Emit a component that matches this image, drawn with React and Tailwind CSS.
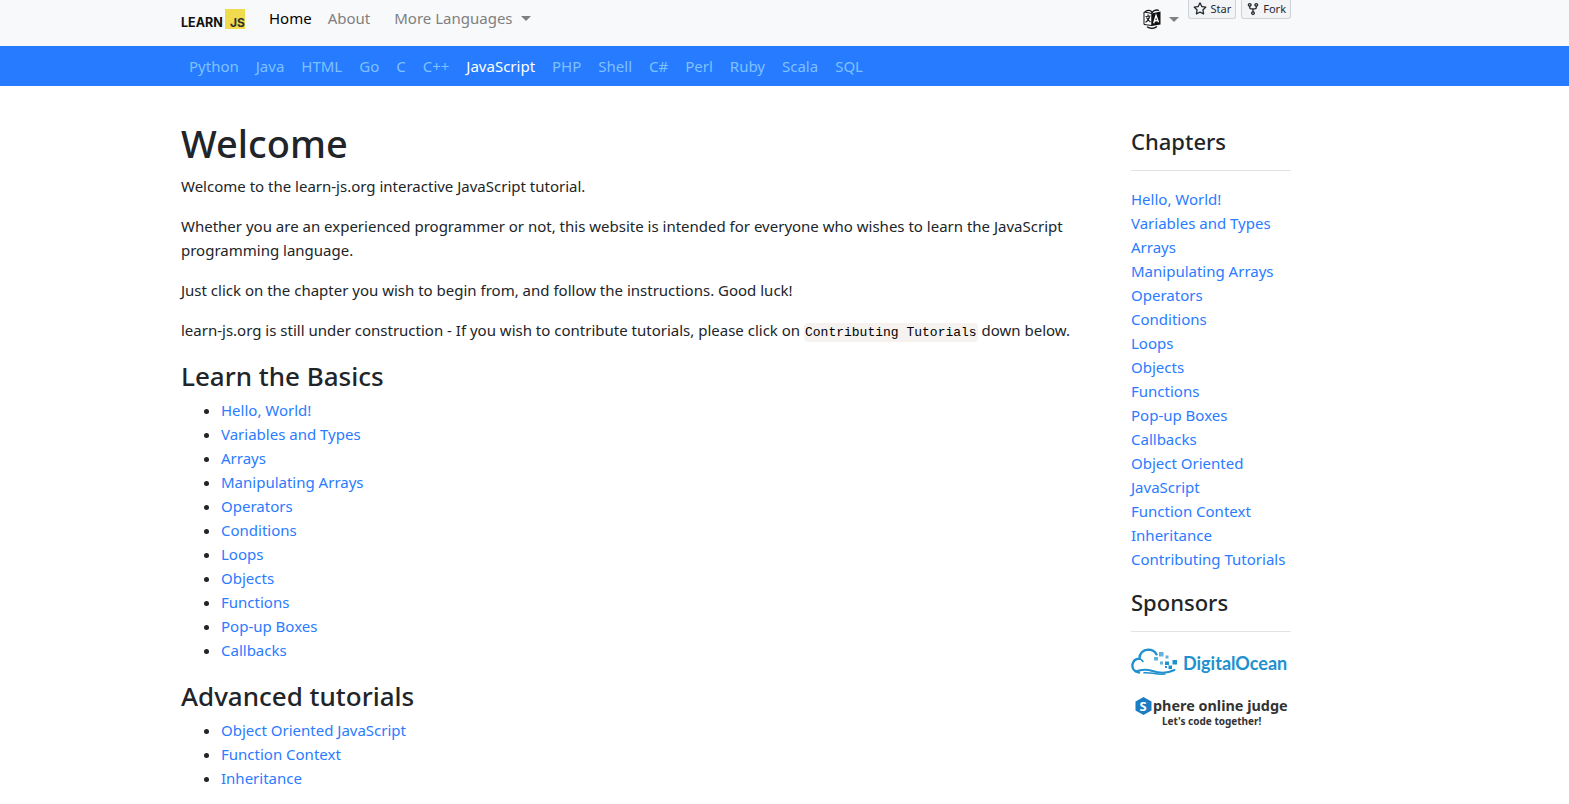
import React from "react";

const languages = ["Python", "Java", "HTML", "Go", "C", "C++", "JavaScript", "PHP", "Shell", "C#", "Perl", "Ruby", "Scala", "SQL"];

const basics = ["Hello, World!", "Variables and Types", "Arrays", "Manipulating Arrays", "Operators", "Conditions", "Loops", "Objects", "Functions", "Pop-up Boxes", "Callbacks"];

const advanced = ["Object Oriented JavaScript", "Function Context", "Inheritance"];

function Caret() {
  return (
    <svg width="10" height="5" viewBox="0 0 10 5" aria-hidden="true" fill="currentColor">
      <path d="M0 0h10L5 5z" />
    </svg>
  );
}

function Logo() {
  return (
    <a href="#" aria-label="Learn JS" className="flex h-[21px] items-end">
      <svg width="64" height="20" viewBox="0 0 64 20">
        <rect x="44" y="0" width="20" height="20" fill="#f0db4f" />
        <text x="0" y="18" fontFamily="Inter, sans-serif" fontWeight="700" fontSize="12.500" fill="#111">LEARN</text>
        <text x="49" y="18" fontFamily="Inter, sans-serif" fontWeight="700" fontSize="12" fill="#323330">JS</text>
      </svg>
    </a>
  );
}

function TranslateIcon() {
  return (
    <svg width="18" height="20" viewBox="0 0 18 20" aria-hidden="true">
      <path d="M1 3 9 4.500V16.500L1 15.500z" fill="#fff" stroke="#111" strokeWidth="1" />
      <path d="M8.500 4.500 17.500 2.500v13L8.500 17z" fill="#111" />
      <path d="M2.500 7.500 7.500 7M5 5.500v1.500M6.500 7.300C6 10 4 12.500 2.500 13.300M3.500 8.500C4.500 10.500 6 12 7.500 13" fill="none" stroke="#111" strokeWidth="1.100" />
      <path d="m10.700 14.200 2.300-7.700 2.500 6.800M11.500 12l3.300-.6" fill="none" stroke="#fff" strokeWidth="1.400" />
      <path d="M2 2.800C5 .8 8 1 9 3.500 11 1 13.500.5 16 1.500M4 17.800c3 1.900 7 1.900 10-.3" fill="none" stroke="#111" strokeWidth="1.300" />
    </svg>
  );
}

function GithubButton({ label, children }) {
  return (
    <a href="#" className="flex h-[19px] items-center gap-[3px] rounded-b-[3px] border border-t-0 border-[#cfd3d7] bg-[#f3f4f6] px-1 text-[11px] leading-4 text-[#24292f]">
      <svg width="14" height="14" viewBox="0 0 16 16" fill="currentColor" aria-hidden="true">
        {children}
      </svg>
      {label}
    </a>
  );
}

function LinkList({ items }) {
  return (
    <ul className="mb-4 list-disc pl-10">
      {items.map((item) => (
        <li key={item}>
          <a href="#" className="text-[#2a7bff]">{item}</a>
        </li>
      ))}
    </ul>
  );
}

function DigitalOceanLogo() {
  return (
    <svg viewBox="0 0 160 28" className="block w-full" role="img" aria-label="DigitalOcean">
      <g fill="none" stroke="#2190cf" strokeLinecap="round">
        <path d="M8 24.500C3 23.500.9 20 1.500 16.500 2.200 12.800 5 10.500 8.500 10.700 8.300 5.500 12 1.800 17 1.600c4 0 7 2 8.500 4.700" strokeWidth="2.400" />
        <path d="M12 13.500c-.8-1.300-1.800-2.200-3.300-2.700" strokeWidth="1.600" />
        <path d="M4.500 23.500c6-2.300 11-2.500 17-.5 8 2.500 14 2.800 22-1" strokeWidth="2" />
        <path d="M13 24.800c7-1 11 2.200 21 1.200" strokeWidth="1.500" />
      </g>
      <g fill="#2190cf">
        <path opacity=".7" d="M23 9h4v3.500h-4zM28 4h4.500v4.500H28zM34.500 7.500h3v3h-3zM29 13.500h3v3h-3z" />
        <path d="M34 13.500h4v3.500h-4zM41.500 12h4.500v4.500h-4.500zM37.500 17.500h3.500v3.500h-3.500zM34 18h2v2h-2z" />
      </g>
      <text x="52" y="22" fontFamily="Lato, sans-serif" fontWeight="700" fontSize="18" fill="#2190cf">DigitalOcean</text>
    </svg>
  );
}

function SphereLogo() {
  return (
    <svg viewBox="0 0 160 34" className="block w-full" role="img" aria-label="Sphere online judge">
      <path d="m12.500 1 8 4.500v9l-8 4.500-8-4.500v-9z" fill="#1c7cc4" />
      <text x="8.500" y="15" fontFamily="Noto Sans, sans-serif" fontWeight="700" fontSize="13" fill="#fff">S</text>
      <text x="22" y="14.500" fontFamily="Noto Sans, sans-serif" fontWeight="700" fontSize="14.400" fill="#333">phere online judge</text>
      <text x="31" y="29" fontFamily="Noto Sans, sans-serif" fontWeight="700" fontSize="10" fill="#333">Let's code together!</text>
    </svg>
  );
}

export default function App() {
  return (
    <div className="bg-white font-['Noto_Sans',sans-serif] text-[15px] leading-6 text-[#212529]">
      <header className="h-[46px] bg-[#f8f9fa]">
        <div className="ml-[181px] flex max-w-[1110px] items-start justify-between">
          <nav className="flex items-start pt-2" aria-label="Main">
            <Logo />
            <a href="#" className="ml-6 leading-5 text-black">Home</a>
            <a href="#" className="ml-4 leading-5 text-[#7f8081]">About</a>
            <button className="ml-6 flex items-center gap-2 leading-5 text-[#7f8081]">
              More Languages <Caret />
            </button>
          </nav>
          <div className="flex items-start gap-[5px]">
            <button aria-label="Language" className="mr-1 flex items-center gap-2 pt-[9px] text-[#7f8081]">
              <TranslateIcon />
              <Caret />
            </button>
            <GithubButton label="Star">
              <path d="M8 .25a.75.75 0 0 1 .673.418l1.882 3.815 4.210.612a.75.75 0 0 1 .416 1.279l-3.046 2.970.719 4.192a.751.751 0 0 1-1.088.791L8 12.347l-3.766 1.980a.75.75 0 0 1-1.088-.79l.72-4.194L.818 6.374a.75.75 0 0 1 .416-1.280l4.210-.611L7.327.668A.75.75 0 0 1 8 .25Zm0 2.445L6.615 5.500a.75.75 0 0 1-.564.410l-3.097.450 2.240 2.184a.75.75 0 0 1 .216.664l-.528 3.084 2.769-1.456a.75.75 0 0 1 .698 0l2.770 1.456-.530-3.084a.75.75 0 0 1 .216-.664l2.240-2.183-3.096-.450a.75.75 0 0 1-.564-.410L8 2.694Z" />
            </GithubButton>
            <GithubButton label="Fork">
              <path d="M5 5.372v.878c0 .414.336.75.75.75h4.500a.75.75 0 0 0 .75-.75v-.878a2.250 2.250 0 1 1 1.500 0v.878a2.250 2.250 0 0 1-2.250 2.250h-1.500v2.128a2.251 2.251 0 1 1-1.500 0V8.500h-1.500A2.250 2.250 0 0 1 3.500 6.250v-.878a2.250 2.250 0 1 1 1.500 0ZM5 3.250a.75.75 0 1 0-1.500 0 .75.75 0 0 0 1.500 0Zm6.750.750a.75.75 0 1 0 0-1.500.75.75 0 0 0 0 1.500Zm-3 8.750a.75.75 0 1 0-1.500 0 .75.75 0 0 0 1.500 0Z" />
            </GithubButton>
          </div>
        </div>
      </header>
      <nav className="bg-[#267bff] py-2" aria-label="Languages">
        <ul className="ml-[181px] flex max-w-[1110px] flex-wrap gap-[17px] px-2">
          {languages.map((name) => (
            <li key={name}>
              <a href="#" className={name === "JavaScript" ? "text-white" : "text-[#7fc1ff]"}>{name}</a>
            </li>
          ))}
        </ul>
      </nav>
      <div className="ml-[181px] flex max-w-[1110px] items-start gap-[30px] pt-[34px]">
        <main className="min-w-0 flex-1">
          <h1 className="mb-2 text-[38px] font-medium leading-[46px]">Welcome</h1>
          <p className="mb-4">Welcome to the learn-js.org interactive JavaScript tutorial.</p>
          <p className="mb-4">
            Whether you are an experienced programmer or not, this website is intended for everyone who wishes to learn the JavaScript programming language.
          </p>
          <p className="mb-4">Just click on the chapter you wish to begin from, and follow the instructions. Good luck!</p>
          <p className="mb-4">
            learn-js.org is still under construction - If you wish to contribute tutorials, please click on{" "}
            <code className="rounded bg-[#f6f2f0] px-px py-0.5 font-['Liberation_Mono',monospace] text-[13px] leading-4 text-black">Contributing Tutorials</code> down below.
          </p>
          <h2 className="mb-1 text-[26px] font-medium leading-9">Learn the Basics</h2>
          <LinkList items={basics} />
          <h2 className="mb-1 text-[26px] font-medium leading-9">Advanced tutorials</h2>
          <LinkList items={advanced} />
        </main>
        <aside className="w-40 shrink-0 pt-[7px]">
          <h3 className="text-[22px] font-medium leading-[29px]">Chapters</h3>
          <hr className="mt-[14px] mb-4 border-[#e2e2e2]" />
          <ul className="mb-[17px]">
            {[...basics, ...advanced, "Contributing Tutorials"].map((item) => (
              <li key={item}>
                <a href="#" className="text-[#2a7bff]">{item}</a>
              </li>
            ))}
          </ul>
          <h3 className="text-[22px] font-medium leading-[29px]">Sponsors</h3>
          <hr className="mt-[14px] mb-4 border-[#e2e2e2]" />
          <a href="#" className="block"><DigitalOceanLogo /></a>
          <a href="#" className="mt-5 block"><SphereLogo /></a>
        </aside>
      </div>
    </div>
  );
}
